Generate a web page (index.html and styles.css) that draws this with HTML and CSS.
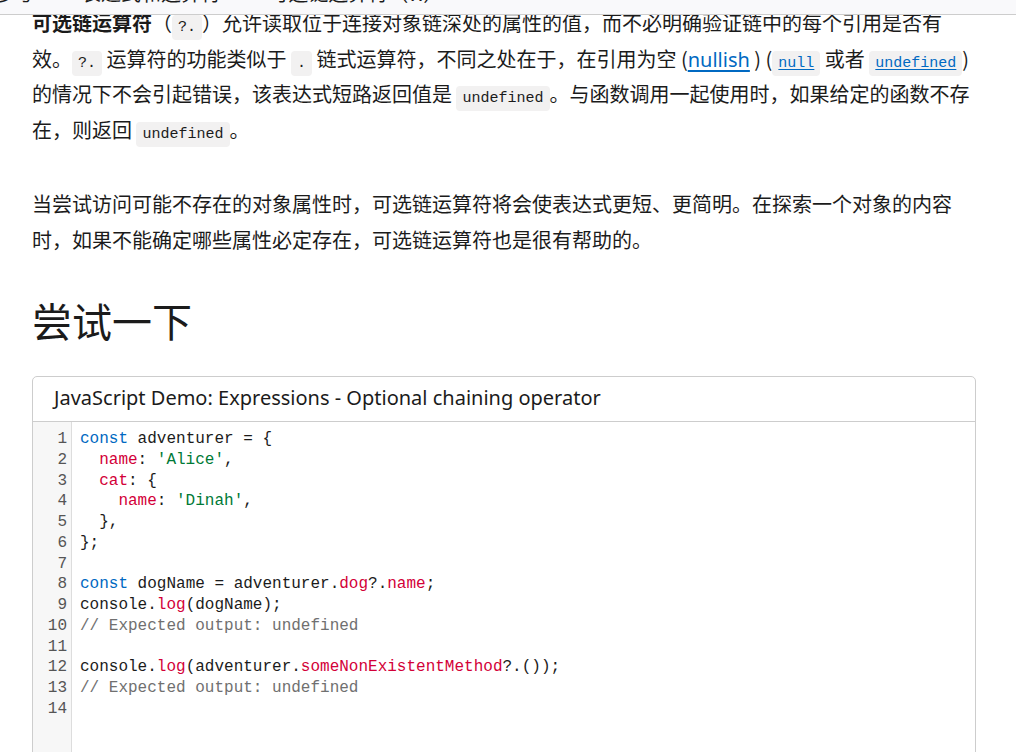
FILE: index.html
```html
<!DOCTYPE html>
<html lang="zh-CN">
<head>
<meta charset="utf-8">
<title>可选链运算符（?.）</title>
<link rel="stylesheet" href="styles.css">
</head>
<body>
<header class="topbar">
  <nav class="crumbs"><span>参考</span><span class="sep">&gt;</span><span>表达式和运算符</span><span class="sep">&gt;</span><span>可选链运算符（?.）</span></nav>
</header>
<main class="content">
  <p class="para"><strong>可选链运算符</strong>（<code class="ic">?.</code>）允许读取位于连接对象链深处的属性的值，而不必明确验证链中的每个引用是否有效。<code class="ic">?.</code> 运算符的功能类似于 <code class="ic">.</code> 链式运算符，不同之处在于，在引用为空 (<a class="link" href="#">nullish</a> ) (<a class="ic ic-link" href="#">null</a> 或者 <a class="ic ic-link" href="#">undefined</a>) 的情况下不会引起错误，该表达式短路返回值是 <code class="ic">undefined</code>。与函数调用一起使用时，如果给定的函数不存在，则返回 <code class="ic">undefined</code>。</p>
  <p class="para">当尝试访问可能不存在的对象属性时，可选链运算符将会使表达式更短、更简明。在探索一个对象的内容时，如果不能确定哪些属性必定存在，可选链运算符也是很有帮助的。</p>
  <h2 class="heading">尝试一下</h2>
  <section class="demo">
    <div class="demo-title">JavaScript Demo: Expressions - Optional chaining operator</div>
    <div class="editor">
      <div class="gutter">
        <div>1</div><div>2</div><div>3</div><div>4</div><div>5</div><div>6</div><div>7</div><div>8</div><div>9</div><div>10</div><div>11</div><div>12</div><div>13</div><div>14</div>
      </div>
      <pre class="code"><span class="kw">const</span> adventurer = {
  <span class="pr">name</span>: <span class="st">'Alice'</span>,
  <span class="pr">cat</span>: {
    <span class="pr">name</span>: <span class="st">'Dinah'</span>,
  },
};

<span class="kw">const</span> dogName = adventurer.<span class="pr">dog</span>?.<span class="pr">name</span>;
console.<span class="pr">log</span>(dogName);
<span class="cm">// Expected output: undefined</span>

console.<span class="pr">log</span>(adventurer.<span class="pr">someNonExistentMethod</span>?.());
<span class="cm">// Expected output: undefined</span>
</pre>
    </div>
  </section>
</main>
</body>
</html>
```

FILE: styles.css
```css
html, body {
  margin: 0;
  padding: 0;
  background: #ffffff;
}

body {
  font-family: "Noto Sans CJK SC", "Noto Sans", sans-serif;
  color: #1b1b1b;
  width: 1016px;
  height: 752px;
  overflow: hidden;
}

.topbar {
  position: fixed;
  top: 0;
  left: 0;
  right: 0;
  height: 14px;
  background: #f9f9fb;
  border-bottom: 1px solid #cdcdcd;
  overflow: hidden;
  z-index: 10;
}

.crumbs {
  display: flex;
  gap: 18px;
  margin-top: -21px;
  margin-left: -6px;
  font-size: 20px;
  line-height: 28px;
  color: #1b1b1b;
  font-family: "Noto Sans CJK SC", sans-serif;
}

.sep {
  color: #9e9e9e;
}

.content {
  padding: 5px 40px 0 32px;
}

.para {
  margin: 0 0 39px 0;
  font-size: 20px;
  line-height: 35.5px;
  font-family: "Noto Sans CJK SC", sans-serif;
}

.para strong {
  font-weight: 700;
}

.ic {
  font-family: "Liberation Mono", "DejaVu Sans Mono", monospace;
  font-size: 15px;
  line-height: 0;
  background: #f2f1f1;
  border-radius: 4px;
  padding: 4px 6px;
  color: #1b1b1b;
}

.ic-link {
  color: #0069c2;
  text-decoration: underline;
  text-underline-offset: 2px;
}

.link {
  color: #0069c2;
  line-height: 0;
  text-decoration: underline;
  text-underline-offset: 3px;
  font-family: "Noto Sans", "Noto Sans CJK SC", sans-serif;
}

.heading {
  margin: 0 0 32px 0;
  font-size: 40px;
  line-height: 48px;
  font-weight: 400;
  font-family: "Noto Sans CJK SC", sans-serif;
  color: #1b1b1b;
}

.demo {
  border: 1px solid #cdcdcd;
  border-radius: 5px;
  width: 942px;
  overflow: hidden;
}

.demo-title {
  height: 44px;
  line-height: 42px;
  padding-left: 21px;
  font-size: 20px;
  color: #1b1b1b;
  border-bottom: 1px solid #cdcdcd;
  font-family: "Noto Sans", sans-serif;
}

.editor {
  display: flex;
  height: 340px;
}

.gutter {
  width: 34px;
  padding: 7px 4px 0 0;
  background: #f7f7f7;
  border-right: 1px solid #dddddd;
  text-align: right;
  font-family: "Liberation Mono", "DejaVu Sans Mono", monospace;
  font-size: 16px;
  line-height: 20.77px;
  color: #555555;
}

.code {
  margin: 0;
  padding: 7px 0 0 8px;
  font-family: "Liberation Mono", "DejaVu Sans Mono", monospace;
  font-size: 16px;
  line-height: 20.77px;
  color: #1b1b1b;
}

.kw { color: #0069c2; }
.pr { color: #d30038; }
.st { color: #007936; }
.cm { color: #707070; }
```
